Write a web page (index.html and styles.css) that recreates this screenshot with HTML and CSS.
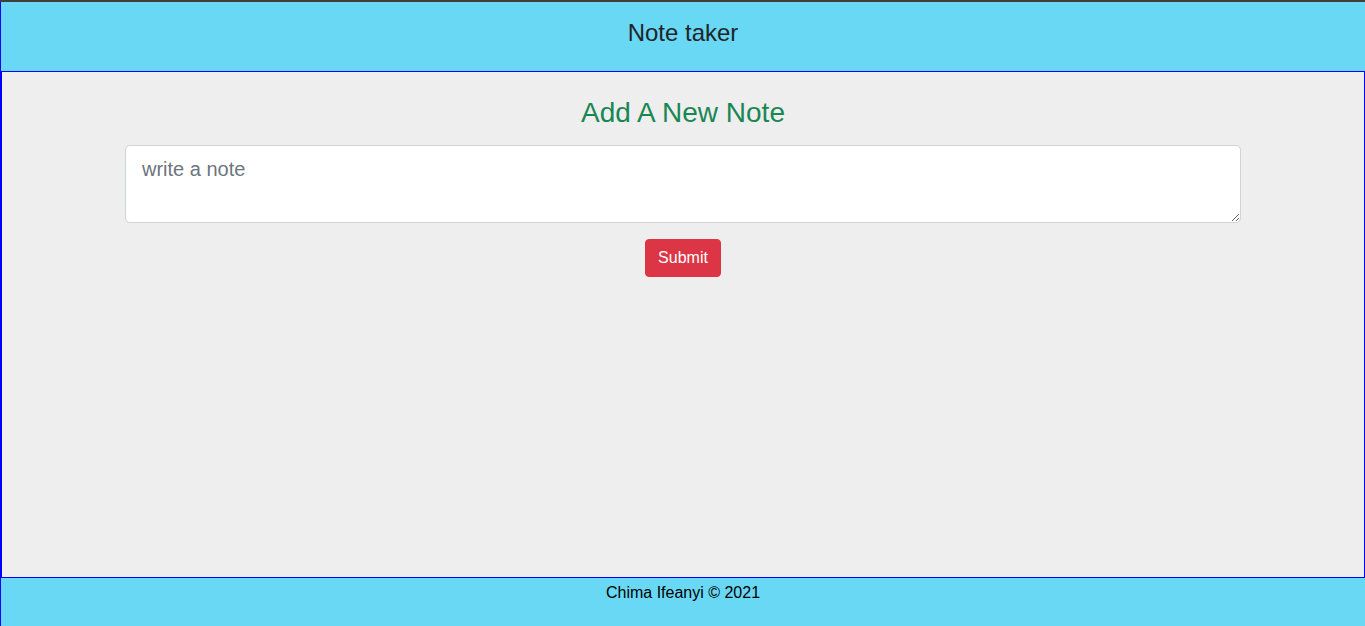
FILE: index.html
```html
<!DOCTYPE html>
<html lang="en">
<head>
<meta charset="utf-8">
<title>Note taker</title>
<link rel="stylesheet" href="styles.css">
</head>
<body>
<div class="topline"></div>
<div class="page">
  <header class="header">Note taker</header>
  <main class="main">
    <div class="container">
      <h1 class="title">Add A New Note</h1>
      <form class="note-form">
        <textarea class="note-input" placeholder="write a note"></textarea>
        <button type="button" class="btn-submit">Submit</button>
      </form>
    </div>
  </main>
  <footer class="footer">Chima Ifeanyi © 2021</footer>
</div>
</body>
</html>
```
FILE: styles.css
```css
* { box-sizing: border-box; }
html, body { margin: 0; padding: 0; }
body {
  height: 626px;
  display: flex;
  flex-direction: column;
  font-family: "Liberation Sans", Arial, sans-serif;
  color: #212529;
  overflow: hidden;
}
.topline {
  height: 2px;
  background: #3f3f3f;
  flex: none;
}
.page {
  flex: 1;
  display: flex;
  flex-direction: column;
  border-left: 1px solid #0000ff;
}
.header {
  height: 69px;
  flex: none;
  background: #68d8f5;
  text-align: center;
  font-size: 24px;
  line-height: 27px;
  padding-top: 17px;
  color: #212529;
}
.main {
  flex: 1;
  background: #eeeeee;
  border: 1px solid #0000ff;
}
.container {
  max-width: 1140px;
  margin: 0 auto;
  padding: 24px 12px 0;
  display: flex;
  flex-direction: column;
  align-items: center;
}
.title {
  margin: 0 0 15px;
  font-size: 28px;
  line-height: 34px;
  font-weight: 400;
  color: #198754;
}
.note-form {
  width: 100%;
  display: flex;
  flex-direction: column;
  align-items: center;
}
.note-input {
  display: block;
  width: 100%;
  height: 78px;
  padding: 8px 16px;
  font-family: "Liberation Sans", Arial, sans-serif;
  font-size: 20px;
  line-height: 30px;
  color: #212529;
  background: #ffffff;
  border: 1px solid #ced4da;
  border-radius: 5px;
  margin: 0;
}
.note-input::placeholder { color: #6c757d; }
.btn-submit {
  margin-top: 16px;
  height: 38px;
  padding: 6px 12px;
  font-family: "Liberation Sans", Arial, sans-serif;
  font-size: 16px;
  line-height: 24px;
  color: #ffffff;
  background: #dc3545;
  border: 1px solid #dc3545;
  border-radius: 4px;
}
.footer {
  height: 48px;
  flex: none;
  background: #68d8f5;
  text-align: center;
  font-size: 16px;
  line-height: 24px;
  padding-top: 3px;
  color: #000000;
}
```
